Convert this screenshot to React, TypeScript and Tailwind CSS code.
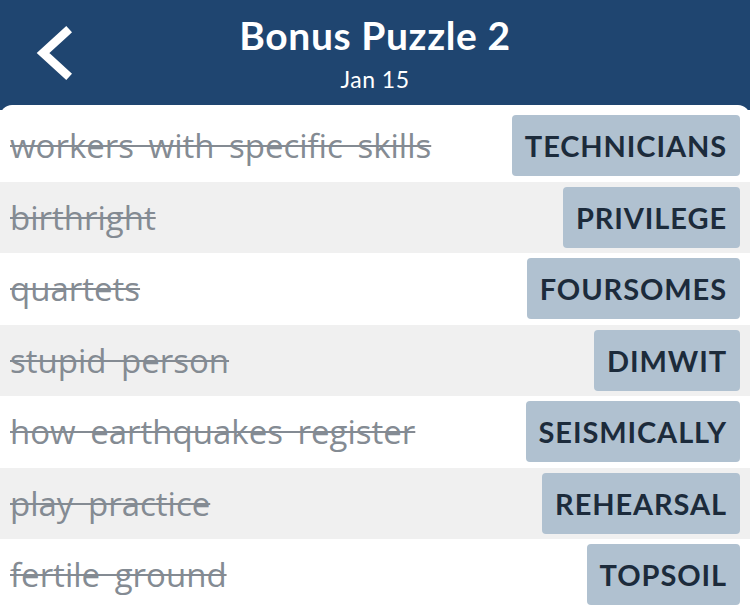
const rows = [
  { clue: 'workers with specific skills', answer: 'TECHNICIANS' },
  { clue: 'birthright', answer: 'PRIVILEGE' },
  { clue: 'quartets', answer: 'FOURSOMES' },
  { clue: 'stupid person', answer: 'DIMWIT' },
  { clue: 'how earthquakes register', answer: 'SEISMICALLY' },
  { clue: 'play practice', answer: 'REHEARSAL' },
  { clue: 'fertile ground', answer: 'TOPSOIL' },
];

export default function App() {
  return (
    <div className="w-[750px] h-[608px] overflow-hidden bg-[#1f4570] font-['Lato',sans-serif]">
      {/* header */}
      <header className="relative h-[105px] flex flex-col items-center pt-[12px]">
        <button className="absolute left-[30px] top-[24px] text-white">
          <svg width="48" height="60" viewBox="0 0 48 60" fill="none">
            <polyline points="36,8 13,29 36,50" stroke="currentColor" strokeWidth="8.5" strokeLinecap="square" strokeLinejoin="miter" />
          </svg>
        </button>
        <h1 className="text-[39px] leading-[46px] font-bold text-white tracking-[0.6px]">Bonus Puzzle 2</h1>
        <p className="text-[23px] leading-[28px] text-white mt-[7px] tracking-[0.5px]">Jan 15</p>
      </header>

      {/* list */}
      <div className="bg-white rounded-t-[12px] pt-[5px]">
        {rows.map((row, i) => (
          <div
            key={row.answer}
            className={`h-[71.5px] flex items-center justify-between pl-[10px] pr-[10px] ${i % 2 ? 'bg-[#f0f0f0]' : 'bg-white'}`}
          >
            <span className="text-[33px] text-[#848b93] line-through decoration-[2px] font-['Open_Sans',sans-serif] [word-spacing:6px]">
              {row.clue}
            </span>
            <span className="h-[61px] flex items-center px-[13px] rounded-[4px] bg-[#b0c1d0] text-[#1c2b3b] text-[29px] font-bold tracking-[0.9px]">
              {row.answer}
            </span>
          </div>
        ))}
      </div>
    </div>
  );
}
